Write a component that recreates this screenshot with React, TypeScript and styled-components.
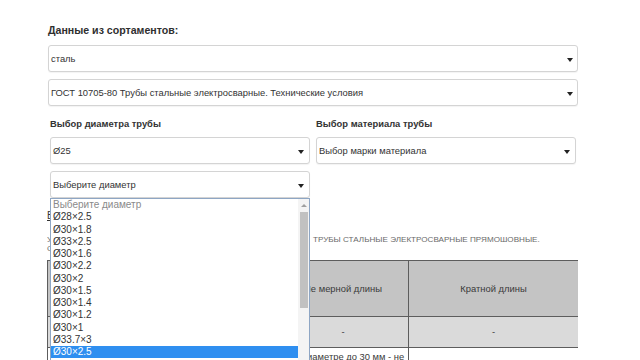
import styled, { createGlobalStyle } from "styled-components";

const GlobalStyle = createGlobalStyle`
    html, body {
        margin: 0;
        padding: 0;
        background: #ffffff;
    }
    body {
        font-family: "Liberation Sans", Arial, sans-serif;
        color: #333;
    }
`;

const Page = styled.div`
    width: 530px;
    padding: 23px 0 0 48px;
    height: 337px;
    overflow: hidden;
`;

const Title = styled.div`
    font-size: 10.6px;
    font-weight: bold;
    color: #2f2f2f;
    height: 15px;
    line-height: 15px;
    margin-bottom: 7px;
`;

const SelectBox = styled.div<{ $arrowRight?: number }>`
    position: relative;
    height: 27px;
    box-sizing: border-box;
    display: flex;
    align-items: center;
    padding: 0 16px 0 2px;
    border: 1px solid #d4d4d4;
    border-radius: 3px;
    box-shadow: 0 1px 1px rgba(0, 0, 0, 0.05);
    background: #fff;
    font-size: 9.4px;
    color: #333;
    white-space: nowrap;
    overflow: hidden;

    &::after {
        content: "";
        position: absolute;
        right: ${({ $arrowRight }) => $arrowRight ?? 4}px;
        top: 12px;
        border-left: 3px solid transparent;
        border-right: 3px solid transparent;
        border-top: 4px solid #222;
    }
`;

const Stack = styled.div`
    display: flex;
    flex-direction: column;
    gap: 7px;
`;

const Columns = styled.div`
    display: grid;
    grid-template-columns: 260px 260px;
    column-gap: 6px;
    padding: 0 2px;
    margin-top: 11px;
    position: relative;
    z-index: 2;
`;

const Column = styled.div`
    display: flex;
    flex-direction: column;
`;

const Label = styled.div`
    font-size: 9.4px;
    font-weight: bold;
    color: #333;
    height: 14px;
    line-height: 14px;
    margin-bottom: 6px;
`;

const Picker = styled.div`
    position: relative;
    margin-top: 7px;
`;

const List = styled.div`
    position: absolute;
    left: 0;
    top: 27px;
    width: 260px;
    height: 162px;
    box-sizing: border-box;
    border: 1px solid #8ea6c4;
    border-bottom: none;
    background: #fff;
    display: flex;
    overflow: hidden;
`;

const Options = styled.div`
    flex: 1;
    display: flex;
    flex-direction: column;
`;

const Option = styled.div<{ $selected?: boolean; $placeholder?: boolean }>`
    height: 12.25px;
    line-height: 12.25px;
    flex-shrink: 0;
    padding-left: 2px;
    font-size: 10px;
    white-space: nowrap;
    color: ${({ $selected, $placeholder }) =>
        $selected ? "#fff" : $placeholder ? "#8a8a8a" : "#333"};
    background: ${({ $selected }) => ($selected ? "#2f8ff0" : "transparent")};
`;

const Scrollbar = styled.div`
    width: 11px;
    background: #f4f4f4;
    display: flex;
    flex-direction: column;
    align-items: center;
`;

const ScrollArrow = styled.div`
    height: 12px;
    width: 100%;
    display: flex;
    align-items: center;
    justify-content: center;

    &::before {
        content: "";
        border-left: 3px solid transparent;
        border-right: 3px solid transparent;
        border-bottom: 3px solid #a0a0a0;
    }
`;

const Thumb = styled.div`
    width: 8px;
    height: 96px;
    background: #c1c1c1;
    margin-top: 1px;
`;

const Content = styled.div`
    margin-top: 12px;
    position: relative;
    z-index: 1;
`;

const LinkLine = styled.div`
    font-size: 10px;
    color: #333;
    height: 12px;
    line-height: 12px;
    text-decoration: underline;
    margin-left: -1px;
`;

const Note = styled.div`
    margin-top: 13px;
    margin-left: -1px;
    font-size: 8.1px;
    line-height: 9px;
    color: #6a6a6a;
    text-transform: uppercase;
    white-space: nowrap;
`;

const NoteLead = styled.span`
    display: inline-block;
    width: 266px;
    overflow: hidden;
    vertical-align: top;
`;

const Table = styled.table`
    margin-top: 7px;
    margin-left: -1px;
    width: 531px;
    border-collapse: collapse;
    font-size: 9.4px;
    color: #3a3a3a;
    table-layout: fixed;
`;

const Cell = styled.td<{ $tone: "head" | "soft" | "plain"; $h: number }>`
    border: 1px solid #5d5d5d;
    height: ${({ $h }) => $h}px;
    padding: 0;
    text-align: center;
    vertical-align: ${({ $tone }) => ($tone === "plain" ? "top" : "middle")};
    padding-top: ${({ $tone }) => ($tone === "plain" ? "3px" : "0")};
    line-height: 12px;
    background: ${({ $tone }) =>
        $tone === "head" ? "#c4c4c4" : $tone === "soft" ? "#dadada" : "#fff"};
`;

const diameters = [
    "Ø28×2.5",
    "Ø30×1.8",
    "Ø33×2.5",
    "Ø30×1.6",
    "Ø30×2.2",
    "Ø30×2",
    "Ø30×1.5",
    "Ø30×1.4",
    "Ø30×1.2",
    "Ø30×1",
    "Ø33.7×3",
    "Ø30×2.5",
];

export default function App() {
    return (
        <>
            <GlobalStyle />
            <Page>
                <Title>Данные из сортаментов:</Title>
                <Stack>
                    <SelectBox>сталь</SelectBox>
                    <SelectBox>ГОСТ 10705-80 Трубы стальные электросварные. Технические условия</SelectBox>
                </Stack>

                <Columns>
                    <Column>
                        <Label>Выбор диаметра трубы</Label>
                        <SelectBox $arrowRight={5}>Ø25</SelectBox>
                        <Picker>
                            <SelectBox $arrowRight={5}>Выберите диаметр</SelectBox>
                            <List>
                                <Options>
                                    <Option $placeholder>Выберите диаметр</Option>
                                    {diameters.map((d, i) => (
                                        <Option key={d + i} $selected={d === "Ø30×2.5"}>
                                            {d}
                                        </Option>
                                    ))}
                                </Options>
                                <Scrollbar>
                                    <ScrollArrow />
                                    <Thumb />
                                </Scrollbar>
                            </List>
                        </Picker>
                    </Column>
                    <Column>
                        <Label>Выбор материала трубы</Label>
                        <SelectBox $arrowRight={5}>Выбор марки материала</SelectBox>
                    </Column>
                </Columns>

                <Content>
                    <LinkLine>Быстрый расчёт веса трубы</LinkLine>
                    <Note>
                        <NoteLead>Условия поставки по длине, ГОСТ 10704-91</NoteLead>
                        трубы стальные электросварные прямошовные.
                        <br />
                        Сортамент
                    </Note>
                    <Table>
                        <colgroup>
                            <col style={{ width: 230 }} />
                            <col style={{ width: 131 }} />
                            <col style={{ width: 170 }} />
                        </colgroup>
                        <tbody>
                            <tr>
                                <Cell $tone="head" $h={55}>Длина трубы</Cell>
                                <Cell $tone="head" $h={55}>Не мерной длины</Cell>
                                <Cell $tone="head" $h={55}>Кратной длины</Cell>
                            </tr>
                            <tr>
                                <Cell $tone="soft" $h={30}>-</Cell>
                                <Cell $tone="soft" $h={30}>-</Cell>
                                <Cell $tone="soft" $h={30}>-</Cell>
                            </tr>
                            <tr>
                                <Cell $tone="plain" $h={40}>Трубы</Cell>
                                <Cell $tone="plain" $h={40}>При диаметре до 30 мм - не менее 4 м</Cell>
                                <Cell $tone="plain" $h={40}></Cell>
                            </tr>
                        </tbody>
                    </Table>
                </Content>
            </Page>
        </>
    );
}
